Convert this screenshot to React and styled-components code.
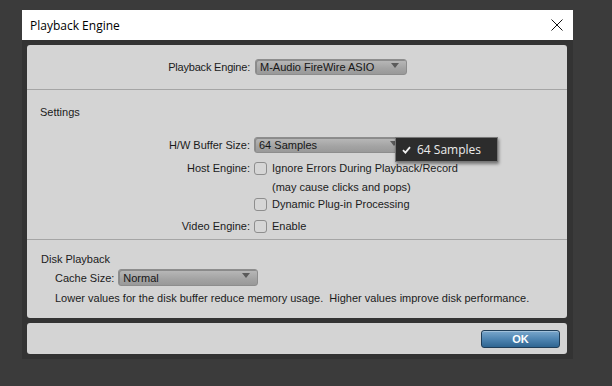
import React from "react";
import styled, { createGlobalStyle } from "styled-components";

const GlobalStyle = createGlobalStyle`
	body {
		margin: 0;
		background: #3b3b3b;
		font-family: "Liberation Sans", Arial, sans-serif;
	}
`;

const Page = styled.div`
	width: 612px;
	height: 386px;
	padding: 10px 0 0 22px;
	box-sizing: border-box;
`;

const Window = styled.div`
	width: 551px;
	background: #333333;
	padding: 0 6px 5px 5px;
	box-sizing: border-box;
`;

const TitleBar = styled.div`
	height: 30px;
	margin: 0 -6px 5px -5px;
	background: #ffffff;
	display: flex;
	align-items: center;
	justify-content: space-between;
	padding: 0 10px 0 8px;
	font-family: "Open Sans", "Noto Sans", sans-serif;
	font-size: 12px;
	color: #000;
`;

const Panel = styled.div`
	background: #d4d4d4;
	border-radius: 3px;
	color: #1b1b1b;
	font-size: 11px;
	margin-top: ${({ gap }) => gap || 0}px;
`;

const Section = styled.div`
	border-top: ${({ divided }) => (divided ? "1px solid #a5a5a5" : "none")};
	padding: ${({ pad }) => pad};
	height: ${({ h }) => (h ? `${h}px` : "auto")};
	box-sizing: border-box;
`;

const EngineRow = styled.div`
	height: 100%;
	display: flex;
	align-items: center;
	justify-content: flex-end;
	gap: 5px;
	padding-right: 160px;
	letter-spacing: -0.2px;
`;

const Heading = styled.div`
	line-height: 14px;
	padding-left: ${({ indent }) => indent}px;
`;

const Form = styled.div`
	display: grid;
	grid-template-columns: 223px 1fr;
	column-gap: 4px;
	margin-top: ${({ top }) => top}px;
`;

const Label = styled.div`
	text-align: right;
	height: ${({ h }) => h}px;
	display: flex;
	align-items: center;
	justify-content: flex-end;
`;

const Field = styled.div`
	height: ${({ h }) => h}px;
	display: flex;
	align-items: center;
	gap: 5px;
	position: relative;
`;

const Indented = styled.span`
	padding-left: 18px;
`;

const Select = styled.div`
	width: ${({ w }) => w}px;
	height: ${({ h }) => h || 16}px;
	box-sizing: border-box;
	border: 1px solid #8d8d8d;
	border-radius: 3px;
	background: linear-gradient(#b9b9b9, #a3a3a3 60%, #999999);
	box-shadow: inset 1px 1px 0 #8a8a8a;
	padding-left: 4px;
	display: flex;
	align-items: center;
	justify-content: space-between;
	font-size: 11px;
	letter-spacing: 0;
	color: #161616;
`;

const Arrow = styled.span`
	width: 0;
	height: 0;
	margin-right: 7px;
	margin-top: -4px;
	border-left: 4px solid transparent;
	border-right: 4px solid transparent;
	border-top: 5px solid #5a5a5a;
`;

const Check = styled.span`
	width: 13px;
	height: 13px;
	box-sizing: border-box;
	border: 1px solid #8e8e8e;
	border-radius: 3px;
	background: #d6d6d6;
	flex: none;
`;

const Popup = styled.div`
	position: absolute;
	left: 141px;
	top: 3px;
	width: 103px;
	height: 25px;
	box-sizing: border-box;
	background: #2c2c2c;
	border: 1px solid #777;
	box-shadow: 1px 2px 3px rgba(0, 0, 0, 0.45);
	display: flex;
	align-items: center;
	padding-left: 6px;
	gap: 6px;
	color: #ececec;
	font-family: "Open Sans", "Noto Sans", sans-serif;
	font-size: 12px;
`;

const Row = styled.div`
	display: flex;
	align-items: center;
	gap: 4px;
	height: ${({ h }) => h}px;
	padding-left: 28px;
`;

const Note = styled.div`
	line-height: 14px;
	padding-left: 28px;
	margin-top: 2px;
`;

const Footer = styled.div`
	height: 31px;
	display: flex;
	align-items: center;
	justify-content: flex-end;
	padding-right: 7px;
`;

const OkButton = styled.button`
	width: 79px;
	height: 18px;
	border: 1px solid #1f3d58;
	border-radius: 3px;
	background: linear-gradient(#7aa7cc, #4f85b2 50%, #2f6591);
	color: #ffffff;
	font-family: "Liberation Sans", Arial, sans-serif;
	font-weight: bold;
	font-size: 11px;
	padding: 0;
	box-shadow: inset 0 1px 0 rgba(255, 255, 255, 0.3);
`;

const CloseIcon = () => (
	<svg width="12" height="12" viewBox="0 0 12 12">
		<path d="M0.5 0.5L11.5 11.5M11.5 0.5L0.5 11.5" stroke="#111" strokeWidth="1" />
	</svg>
);

const Tick = () => (
	<svg width="9" height="8" viewBox="0 0 9 8">
		<path d="M1 4.2L3.4 6.6L8 1.2" stroke="#f0f0f0" strokeWidth="1.8" fill="none" />
	</svg>
);

const App = () => (
	<Page>
		<GlobalStyle/>
		<Window>
			<TitleBar>
				<span>Playback Engine</span>
				<CloseIcon/>
			</TitleBar>

			<Panel>
				<Section h={44}>
					<EngineRow>
						<span>Playback Engine:</span>
						<Select w={152}>M-Audio FireWire ASIO<Arrow/></Select>
					</EngineRow>
				</Section>

				<Section divided pad="15px 0 1px 0">
					<Heading indent={13}>Settings</Heading>
					<Form top={15}>
						<Label h={22}>H/W Buffer Size:</Label>
						<Field h={22}>
							<Select w={152}>64 Samples<Arrow/></Select>
							<Popup><Tick/>64 Samples</Popup>
						</Field>
						<Label h={24}>Host Engine:</Label>
						<Field h={24}><Check/>Ignore Errors During Playback/Record</Field>
						<Label h={14}/>
						<Field h={14}><Indented>(may cause clicks and pops)</Indented></Field>
						<Label h={20}/>
						<Field h={20}><Check/>Dynamic Plug-in Processing</Field>
						<Label h={24}>Video Engine:</Label>
						<Field h={24}><Check/>Enable</Field>
					</Form>
				</Section>

				<Section divided pad="12px 0 13px 0">
					<Heading indent={14}>Disk Playback</Heading>
					<Row h={23}>
						<span>Cache Size:</span>
						<Select w={140} h={17}>Normal<Arrow/></Select>
					</Row>
					<Note>Lower values for the disk buffer reduce memory usage.&nbsp; Higher values improve disk performance.</Note>
				</Section>
			</Panel>

			<Panel gap={5}>
				<Footer>
					<OkButton>OK</OkButton>
				</Footer>
			</Panel>
		</Window>
	</Page>
);

export default App;
